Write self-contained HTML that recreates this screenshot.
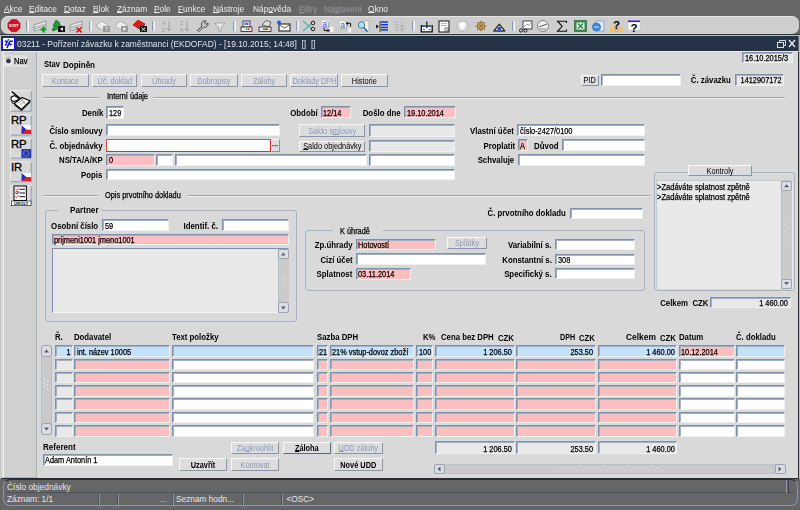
<!DOCTYPE html><html><head><meta charset="utf-8"><style>
*{margin:0;padding:0;box-sizing:border-box}
html,body{width:800px;height:510px;overflow:hidden;background:#666;font-family:"Liberation Sans",sans-serif;color:#000}
div{position:absolute}
.t{white-space:nowrap}
.rg{-webkit-text-stroke:0.25px currentColor}
.fld{border-top:1px solid #7f90aa;border-left:1px solid #7f90aa;border-right:1px solid #eef1f4;border-bottom:1px solid #eef1f4;box-shadow:inset 1px 1px 0 #a4b1c4}
.w{background:#fff}
.p{background:#ffbfc0}
.g{background:#e8e8e8}
.bl{background:#c4e1fb}
.btn{border-top:1px solid #f8f8f8;border-left:1px solid #f8f8f8;border-right:1px solid #8495ad;border-bottom:1px solid #8495ad;background:#dddddd}
u{text-decoration:underline;text-underline-offset:0px;text-decoration-thickness:1px}
.frm{border:1px solid #a6b2c5;border-radius:3px}
.hr{border-top:1px solid #a6a6a6;border-bottom:1px solid #eeeeee}
</style></head><body>
<div class="t" style="left:3.50px;top:3.00px;font-size:9px;line-height:12px;transform:scaleX(0.93);transform-origin:0 0;color:#ececec;"><u>A</u>kce</div>
<div class="t" style="left:29.00px;top:3.00px;font-size:9px;line-height:12px;transform:scaleX(0.93);transform-origin:0 0;color:#ececec;"><u>E</u>ditace</div>
<div class="t" style="left:64.00px;top:3.00px;font-size:9px;line-height:12px;transform:scaleX(0.93);transform-origin:0 0;color:#ececec;"><u>D</u>otaz</div>
<div class="t" style="left:93.00px;top:3.00px;font-size:9px;line-height:12px;transform:scaleX(0.93);transform-origin:0 0;color:#ececec;"><u>B</u>lok</div>
<div class="t" style="left:117.00px;top:3.00px;font-size:9px;line-height:12px;transform:scaleX(0.93);transform-origin:0 0;color:#ececec;"><u>Z</u>áznam</div>
<div class="t" style="left:154.00px;top:3.00px;font-size:9px;line-height:12px;transform:scaleX(0.93);transform-origin:0 0;color:#ececec;"><u>P</u>ole</div>
<div class="t" style="left:178.00px;top:3.00px;font-size:9px;line-height:12px;transform:scaleX(0.93);transform-origin:0 0;color:#ececec;"><u>F</u>unkce</div>
<div class="t" style="left:213.00px;top:3.00px;font-size:9px;line-height:12px;transform:scaleX(0.93);transform-origin:0 0;color:#ececec;"><u>N</u>ástroje</div>
<div class="t" style="left:252.50px;top:3.00px;font-size:9px;line-height:12px;transform:scaleX(0.93);transform-origin:0 0;color:#ececec;">Náp<u>o</u>věda</div>
<div class="t" style="left:368.00px;top:3.00px;font-size:9px;line-height:12px;transform:scaleX(0.93);transform-origin:0 0;color:#ececec;"><u>O</u>kno</div>
<div class="t" style="left:299.00px;top:3.00px;font-size:9px;line-height:12px;transform:scaleX(0.93);transform-origin:0 0;color:#8d9096;text-shadow:0.6px 0.6px 0 #7a7a7a"><u>F</u>iltry</div>
<div class="t" style="left:323.50px;top:3.00px;font-size:9px;line-height:12px;transform:scaleX(0.93);transform-origin:0 0;color:#8d9096;text-shadow:0.6px 0.6px 0 #7a7a7a">Na<u>s</u>tavení</div>
<div class="" style="left:1.00px;top:16.00px;width:798.00px;height:18.00px;background:#cecece;border-radius:7px;border-top:1px solid #e4e4e4;border-left:1px solid #dadada"></div>
<div class="" style="left:26.00px;top:21.00px;width:2.50px;height:10.00px;background:#d8e0ea;border-left:1px solid #8c9cb4;border-right:1px solid #f4f4f4"></div>
<div class="" style="left:89.00px;top:21.00px;width:2.50px;height:10.00px;background:#d8e0ea;border-left:1px solid #8c9cb4;border-right:1px solid #f4f4f4"></div>
<div class="" style="left:152.00px;top:21.00px;width:2.50px;height:10.00px;background:#d8e0ea;border-left:1px solid #8c9cb4;border-right:1px solid #f4f4f4"></div>
<div class="" style="left:233.00px;top:21.00px;width:2.50px;height:10.00px;background:#d8e0ea;border-left:1px solid #8c9cb4;border-right:1px solid #f4f4f4"></div>
<div class="" style="left:296.00px;top:21.00px;width:2.50px;height:10.00px;background:#d8e0ea;border-left:1px solid #8c9cb4;border-right:1px solid #f4f4f4"></div>
<div class="" style="left:412.00px;top:21.00px;width:2.50px;height:10.00px;background:#d8e0ea;border-left:1px solid #8c9cb4;border-right:1px solid #f4f4f4"></div>
<div class="" style="left:512.00px;top:21.00px;width:2.50px;height:10.00px;background:#d8e0ea;border-left:1px solid #8c9cb4;border-right:1px solid #f4f4f4"></div>
<svg style="position:absolute;left:0;top:0" width="800" height="40" viewBox="0 0 800 40"><polygon points="20.10,28.13 16.53,31.70 11.47,31.70 7.90,28.13 7.90,23.07 11.47,19.50 16.53,19.50 20.10,23.07" fill="#d4102a" stroke="#b00818" stroke-width="0.5"/><text x="14" y="27.3" font-family="Liberation Sans" font-weight="bold" font-size="4.2" fill="#fff" text-anchor="middle">EXIT</text><polygon points="34,25 46,21 46,28 34,31" fill="#e8e8e8" stroke="#8a8a8a" stroke-width="0.8"/><path d="M34 27.5 L46 24 M34 29 L46 25.8" stroke="#9a9a9a" stroke-width="0.8"/><path d="M43.5 26.5 V32.5 M40.5 29.5 H46.5" stroke="#10a020" stroke-width="2.2"/><polygon points="56,20 60,23 58.5,23 62,27 53,31 52,29 55,27 53,26" fill="#18a030" stroke="#0a5a10" stroke-width="0.6"/><rect x="58" y="26" width="7" height="6" fill="#111"/><polygon points="60,29 63,27.2 63,30.8" fill="#fff"/><polygon points="70,25 82,21 82,28 70,31" fill="#e8e8e8" stroke="#8a8a8a" stroke-width="0.8"/><path d="M70 27.5 L82 24 M70 29 L82 25.8" stroke="#9a9a9a" stroke-width="0.8"/><path d="M76.5 27.5 L81.5 32.3 M81.5 27.5 L76.5 32.3" stroke="#e01010" stroke-width="1.6"/><polygon points="96,26 101,21 108,25 104,31" fill="#ececec" stroke="#a8a8a8" stroke-width="0.8"/><rect x="103" y="26" width="7" height="6" fill="#9a9a9a"/><text x="106.5" y="31" font-size="5" font-weight="bold" fill="#eee" text-anchor="middle" font-family="Liberation Sans">?</text><polygon points="115,26 120,21 127,25 123,31" fill="#ececec" stroke="#a8a8a8" stroke-width="0.8"/><rect x="121" y="26" width="7" height="6" fill="#9a9a9a"/><polygon points="123,27.2 126.5,29 123,30.8" fill="#eee"/><polygon points="133,25 138,20 145,24 141,30" fill="#e01818" stroke="#900" stroke-width="0.6"/><rect x="140" y="26" width="7" height="6" fill="#111"/><path d="M141.5 27.5 L145.5 31 M145.5 27.5 L141.5 31" stroke="#fff" stroke-width="0.9"/><text x="162" y="25.3" font-size="5" fill="#9a9a9a" font-family="Liberation Sans">A</text><text x="162" y="31.5" font-size="5" fill="#9a9a9a" font-family="Liberation Sans">Z</text><path d="M169 21 V31 M167 28.5 L169 31 L171 28.5" stroke="#9a9a9a" stroke-width="0.9" fill="none"/><text x="180" y="25.3" font-size="5" fill="#9a9a9a" font-family="Liberation Sans">Z</text><text x="180" y="31.5" font-size="5" fill="#9a9a9a" font-family="Liberation Sans">A</text><path d="M187 21 V31 M185 28.5 L187 31 L189 28.5" stroke="#9a9a9a" stroke-width="0.9" fill="none"/><path d="M197 31 L202 26 C200.5 23 203 20 206 21 L204.5 23 L206 24.5 L208 23 C208.5 26 206 28 203.5 27 L198.5 32" stroke="#333" stroke-width="0.9" fill="none"/><polygon points="214,23 225,23 221,27 221,31 218.5,31 218.5,27" fill="#e8e8e8" stroke="#9a9a9a" stroke-width="0.8"/><rect x="243" y="21" width="7" height="6" fill="#f4f4ff" stroke="#223" stroke-width="0.8"/><rect x="244.5" y="22.5" width="4" height="2.5" fill="#6a6ad0"/><rect x="241" y="27" width="11" height="4.5" fill="#e8e8e8" stroke="#222" stroke-width="0.8"/><rect x="246" y="28.5" width="1.5" height="1.5" fill="#2a2"/><rect x="248" y="28.5" width="1.5" height="1.5" fill="#d22"/><polygon points="262,25 266,20.5 271,22 269,27" fill="#ddd" stroke="#333" stroke-width="0.7"/><rect x="259" y="27" width="12" height="4.5" fill="#e8e8e8" stroke="#222" stroke-width="0.8"/><rect x="263" y="28.5" width="3" height="1.5" fill="#2a2"/><rect x="266" y="28.5" width="2" height="1.5" fill="#d22"/><rect x="279" y="24" width="11" height="7" fill="#fff" stroke="#111" stroke-width="1"/><path d="M279.5 25 L284.5 28 L289.5 25" stroke="#111" stroke-width="0.7" fill="none"/><circle cx="279" cy="22.5" r="2" fill="#1060f0"/><path d="M303 21 L311 28 M303 31 L311 24" stroke="#50b0b0" stroke-width="1.2"/><circle cx="313" cy="23" r="1.8" fill="none" stroke="#111" stroke-width="0.9"/><circle cx="313" cy="29" r="1.8" fill="none" stroke="#111" stroke-width="0.9"/><rect x="322" y="20.5" width="6.5" height="7" fill="#f8f8f8"/><path d="M326.5 20.5 L328.5 22.5 V27.5" stroke="#999" stroke-width="0.8" fill="none"/><path d="M322 27.8 H328" stroke="#888" stroke-width="0.6"/><text x="322.2" y="26.8" font-size="8.5" fill="#3a4cff" font-family="Liberation Sans">a</text><path d="M324.2 28 V30.6 H328" stroke="#111" stroke-width="1" fill="none"/><polygon points="327.5,29 330,30.6 327.5,32.2" fill="#111"/><rect x="330" y="26.5" width="3.3" height="5.5" fill="#f0f0f0"/><rect x="340" y="21.5" width="6.5" height="7" fill="#f8f8f8"/><path d="M344.5 21.5 L346.5 23.5 V28.5" stroke="#999" stroke-width="0.8" fill="none"/><path d="M340 28.8 H346" stroke="#888" stroke-width="0.6"/><text x="340.2" y="27.8" font-size="8.5" fill="#3a4cff" font-family="Liberation Sans">a</text><path d="M350.6 26.5 V23.3 H347.5" stroke="#111" stroke-width="1" fill="none"/><polygon points="348,21.7 345.5,23.3 348,24.9" fill="#111"/><rect x="348" y="28" width="3.3" height="4.5" fill="#f0f0f0"/><rect x="362" y="21" width="7" height="10" fill="#f0f0f0" stroke="#999" stroke-width="0.6"/><circle cx="361.5" cy="25" r="3.2" fill="#bfe0f0" stroke="#3080a0" stroke-width="1"/><path d="M363.5 27.5 L367.5 31.5" stroke="#1060d0" stroke-width="1.6"/><path d="M380 21 V32" stroke="#111" stroke-width="0.8"/><path d="M381 22 H388 M381 24.7 H388 M381 27.4 H388 M381 30.1 H388" stroke="#1a38d0" stroke-width="1.5"/><polygon points="376,24.5 379,26.5 376,28.5" fill="#111"/><path d="M395 22 H399 M395 24.7 H399 M395 27.4 H399 M395 30.1 H399 M402 21 V32 M400 26 H405 M400 29 H405" stroke="#aaa" stroke-width="0.8"/><rect x="421" y="20" width="11" height="1" fill="#c8d8ec"/><path d="M421.3 25 V31.8 H432.2 V25" stroke="#111" stroke-width="1.3" fill="#f4f4f4"/><rect x="422" y="25" width="3" height="2" fill="#2a58d8"/><rect x="428.5" y="25" width="3" height="2" fill="#2a58d8"/><path d="M423 29.5 H425 M428.5 29.5 H430.5" stroke="#555" stroke-width="0.8"/><path d="M426.8 21.5 V26.5" stroke="#111" stroke-width="1.2"/><polygon points="424.8,25.5 426.8,28.3 428.8,25.5" fill="#111"/><rect x="439" y="21" width="10" height="11" fill="#fff" stroke="#111" stroke-width="1"/><path d="M441 23.5 H447 M441 25.5 H447" stroke="#999" stroke-width="0.7"/><rect x="445" y="28" width="3" height="3" fill="none" stroke="#333" stroke-width="0.6"/><circle cx="462.5" cy="26" r="5.5" fill="#e0e0e0" stroke="#aaa" stroke-width="0.8"/><path d="M459 23 C461 22 463 24 465 23 C466 25 464 28 462 30 C461 27 459 26 459 23" fill="#fff"/><circle cx="481" cy="26" r="3.6" fill="none" stroke="#a07020" stroke-width="1.3"/><path d="M481 20.5 V31.5 M475.5 26 H486.5 M477 22 L485 30 M485 22 L477 30" stroke="#a07020" stroke-width="1"/><circle cx="481" cy="26" r="1.2" fill="#a07020"/><polygon points="493.8,31 499.3,24.2 504.8,31" fill="#e8e8e8" stroke="#333" stroke-width="1.3" stroke-linejoin="round"/><circle cx="499.3" cy="28.6" r="1.9" fill="#1848f0"/><path d="M494.5 24.5 L495.8 25.5 M504 24.5 L502.8 25.5 M499.3 21.2 V22.6 M496.5 22.2 L497.3 23.2 M502 22.2 L501.3 23.2" stroke="#e8e030" stroke-width="0.8"/><rect x="523" y="21" width="9" height="8" fill="#fff" stroke="#222" stroke-width="0.8"/><path d="M524 27 L527 24 L529 25.5 L531 23" stroke="#555" stroke-width="0.6" fill="none"/><circle cx="521" cy="30.5" r="1.6" fill="none" stroke="#111" stroke-width="0.9"/><circle cx="525.5" cy="30.5" r="1.6" fill="none" stroke="#111" stroke-width="0.9"/><circle cx="543" cy="26" r="5.5" fill="#f0f0f0" stroke="#777" stroke-width="0.9"/><path d="M539 27 L547 24" stroke="#333" stroke-width="0.8"/><path d="M540 29 H546" stroke="#666" stroke-width="0.8"/><path d="M566.5 23 V21.2 H557.5 L562.2 26.3 L557.5 31.3 H566.5 V29.5" stroke="#111" stroke-width="1.1" fill="none"/><rect x="574.5" y="20.5" width="12" height="11" fill="#3a8a48" stroke="#2a6a38" stroke-width="0.7"/><rect x="576.5" y="22.5" width="8" height="7" fill="#e8f4e8"/><path d="M578 23.5 L583 28.5 M583 23.5 L578 28.5" stroke="#2a7a3a" stroke-width="1.3"/><rect x="596" y="21" width="8" height="10" fill="#e0e8ff" stroke="#8090c0" stroke-width="0.7"/><circle cx="596.5" cy="27" r="4" fill="#3a8ae8" stroke="#1a5ab0" stroke-width="0.6"/><path d="M594 27 H599" stroke="#fff" stroke-width="0.8"/><rect x="610" y="26.5" width="3.5" height="5.5" fill="#f4c070"/><rect x="614.5" y="26.5" width="4" height="5.5" fill="#e8b060"/><rect x="619.5" y="26.5" width="3.5" height="5.5" fill="#f4c070"/><text x="616.5" y="29.2" font-size="11.5" font-weight="bold" fill="#000" text-anchor="middle" font-family="Liberation Sans">?</text><rect x="628" y="20.5" width="12" height="9.5" fill="#fff" stroke="#bbb" stroke-width="0.5"/><rect x="628" y="20.5" width="12" height="1.6" fill="#4010e0"/><text x="634" y="31.5" font-size="11.5" font-weight="bold" fill="#000" text-anchor="middle" font-family="Liberation Sans">?</text></svg>
<div class="" style="left:0.00px;top:34.00px;width:800.00px;height:2.00px;background:#59606a;border-top:1px solid #30363e;border-bottom:1px solid #b8bec6"></div>
<div class="" style="left:1.00px;top:36.00px;width:797.00px;height:15.00px;background:#263247"></div>
<div class="" style="left:2.00px;top:37.00px;width:13.00px;height:13.00px;background:#fff;border:1.3px solid #1414e0"><svg width="11" height="11" style="position:absolute;left:-0.3px;top:-0.3px"><path d="M1.8 3.2 H4.3 L2.4 7.8" stroke="#1414e0" stroke-width="1.5" fill="none"/><path d="M4 10 L6.8 3.3 H10 M5.6 6.4 H8.8" stroke="#1414e0" stroke-width="1.6" fill="none"/><circle cx="5.3" cy="1.8" r="0.8" fill="#102080"/></svg></div>
<div class="t" style="left:16.50px;top:38.00px;font-size:9.4px;line-height:12px;color:#dfe4ec;transform:scaleX(0.9);transform-origin:0 0">03211 - Pořízení závazku k zaměstnanci (EKDOFAD) - [19.10.2015; 14:48]&nbsp; []&nbsp; []</div>
<svg style="position:absolute;left:774px;top:38px" width="24" height="11"><rect x="3.5" y="4.5" width="6" height="5" fill="none" stroke="#d8dce4" stroke-width="1"/><path d="M5.5 4.5 V2.5 H11.5 V7.5 H9.5" fill="none" stroke="#d8dce4" stroke-width="1"/><path d="M15 2 L21 9 M21 2 L15 9" stroke="#eef0f4" stroke-width="1.3"/></svg>
<div class="" style="left:1.00px;top:51.00px;width:797.50px;height:428.00px;background:#d9d9d9;border-top:1px solid #e8eaee;border-right:1.5px solid #2e3038;border-bottom:1px solid #2a2c30"></div>
<div class="" style="left:0.00px;top:36.00px;width:1.00px;height:443.00px;background:#c8c8c8"></div>
<div class="" style="left:798.50px;top:36.00px;width:1.50px;height:443.00px;background:#bcbcbc"></div>
<div class="" style="left:3.00px;top:52.00px;width:34.00px;height:425.50px;border-left:1px solid #f2f2f2;border-right:1px solid #a8b2c0;border-bottom:1px solid #a8b2c0;background:#d1d1d1"></div>
<div class="" style="left:4.00px;top:55.00px;width:23.00px;height:12.00px;background:#dfdfdf"></div>
<svg style="position:absolute;left:3px;top:55px" width="12" height="12"><circle cx="5.5" cy="6" r="3.8" fill="#d8d8d8" stroke="#f4f4f4" stroke-width="1"/><path d="M2.2 4.5 A3.8 3.8 0 0 1 8 3" stroke="#9a9a9a" stroke-width="1" fill="none"/><circle cx="5.5" cy="6" r="2.3" fill="#303848"/></svg>
<div class="t rg" style="left:14.00px;top:56.00px;font-size:8.2px;line-height:12px;transform:scaleX(0.92);transform-origin:0 0;">Nav</div>
<svg style="position:absolute;left:0;top:0" width="40" height="220" viewBox="0 0 40 220"><rect x="10" y="90" width="21.7" height="21.700000000000003" fill="#d8d8d8"/><path d="M10.5 111.7 V90.5 H31.2" stroke="#ececec" stroke-width="1" fill="none"/><path d="M31.2 91 V111.2 H10.5" stroke="#8c9cb4" stroke-width="1" fill="none"/><rect x="10" y="114.4" width="21.7" height="21.19999999999999" fill="#d8d8d8"/><path d="M10.5 135.6 V114.9 H31.2" stroke="#ececec" stroke-width="1" fill="none"/><path d="M31.2 115.4 V135.1 H10.5" stroke="#8c9cb4" stroke-width="1" fill="none"/><rect x="10" y="138" width="21.7" height="20.69999999999999" fill="#d8d8d8"/><path d="M10.5 158.7 V138.5 H31.2" stroke="#ececec" stroke-width="1" fill="none"/><path d="M31.2 139 V158.2 H10.5" stroke="#8c9cb4" stroke-width="1" fill="none"/><rect x="10" y="161.5" width="21.7" height="20.69999999999999" fill="#d8d8d8"/><path d="M10.5 182.2 V162.0 H31.2" stroke="#ececec" stroke-width="1" fill="none"/><path d="M31.2 162.5 V181.7 H10.5" stroke="#8c9cb4" stroke-width="1" fill="none"/><rect x="10" y="185.3" width="21.7" height="20.399999999999977" fill="#d8d8d8"/><path d="M10.5 205.7 V185.8 H31.2" stroke="#ececec" stroke-width="1" fill="none"/><path d="M31.2 186.3 V205.2 H10.5" stroke="#8c9cb4" stroke-width="1" fill="none"/><polygon points="14.2,103.5 22,97.5 30,100.8 21.5,109.5" fill="#fafafa" stroke="#000" stroke-width="1.2" stroke-linejoin="round"/><path d="M14.5 104.8 L21.5 110.6 L30 102" stroke="#222" stroke-width="1.1" fill="none"/><path d="M17.5 103.3 L23.5 99.5 M19.5 105 L25.5 101.3 M21.8 99 L25.8 105.5" stroke="#888" stroke-width="0.7"/><path d="M11.8 91.5 L20 98.5" stroke="#000" stroke-width="1.5"/><polygon points="11,97.3 14.5,95.6 18.3,98 17.6,100.3 13.5,101.5 11.2,100.2" fill="#fff" stroke="#000" stroke-width="1.1"/><path d="M11.5 101.5 L13.5 104" stroke="#000" stroke-width="1"/><text x="10.9" y="124.2" font-size="11.3" font-family="Liberation Sans" fill="#000" stroke="#000" stroke-width="0.35">RP</text><rect x="21.6" y="125.2" width="9.4" height="8.799999999999997" fill="#fff"/><rect x="21.6" y="129.6" width="9.4" height="4.399999999999999" fill="#e81c28"/><polygon points="21.6,125.2 26.3,129.6 21.6,134" fill="#1830c8"/><text x="10.9" y="147.7" font-size="11.3" font-family="Liberation Sans" fill="#000" stroke="#000" stroke-width="0.35">RP</text><rect x="21.4" y="149" width="9.7" height="8.900000000000006" fill="#2838c0"/><circle cx="29.05" cy="153.45" r="0.45" fill="#f0e020"/><circle cx="28.67" cy="154.85" r="0.45" fill="#f0e020"/><circle cx="27.65" cy="155.87" r="0.45" fill="#f0e020"/><circle cx="26.25" cy="156.25" r="0.45" fill="#f0e020"/><circle cx="24.85" cy="155.87" r="0.45" fill="#f0e020"/><circle cx="23.83" cy="154.85" r="0.45" fill="#f0e020"/><circle cx="23.45" cy="153.45" r="0.45" fill="#f0e020"/><circle cx="23.83" cy="152.05" r="0.45" fill="#f0e020"/><circle cx="24.85" cy="151.03" r="0.45" fill="#f0e020"/><circle cx="26.25" cy="150.65" r="0.45" fill="#f0e020"/><circle cx="27.65" cy="151.03" r="0.45" fill="#f0e020"/><circle cx="28.67" cy="152.05" r="0.45" fill="#f0e020"/><text x="10.9" y="171.2" font-size="11.3" font-family="Liberation Sans" fill="#000" stroke="#000" stroke-width="0.35">IR</text><rect x="21.6" y="173" width="9.4" height="8" fill="#fff"/><rect x="21.6" y="177.0" width="9.4" height="4.0" fill="#e81c28"/><polygon points="21.6,173 26.3,177.0 21.6,181" fill="#1830c8"/><rect x="14" y="186" width="12.4" height="14.5" fill="#fff" stroke="#111" stroke-width="1.1"/><path d="M15.3 189 L16.8 190.3 L18.6 187.8" stroke="#e02020" stroke-width="0.9" fill="none"/><path d="M19.5 189.3 H25" stroke="#111" stroke-width="1"/><path d="M15.3 192.7 L16.8 194.0 L18.6 191.5" stroke="#e02020" stroke-width="0.9" fill="none"/><path d="M19.5 193.0 H25" stroke="#111" stroke-width="1"/><path d="M15.3 196.4 L16.8 197.70000000000002 L18.6 195.20000000000002" stroke="#e02020" stroke-width="0.9" fill="none"/><path d="M19.5 196.70000000000002 H25" stroke="#111" stroke-width="1"/><rect x="16" y="191.5" width="2.5" height="2" fill="none" stroke="#333" stroke-width="0.5"/><rect x="11.5" y="201" width="19.5" height="4.7" fill="#fff" stroke="#111" stroke-width="0.6"/><text x="21.25" y="205.2" font-size="4.2" font-weight="bold" text-anchor="middle" font-family="Liberation Sans" fill="#000">ÚKOLY</text></svg>
<div class="t" style="left:43.75px;top:59.00px;font-size:8.2px;line-height:12px;transform:scaleX(0.93);transform-origin:0 0;font-weight:bold;">Stav</div>
<div class="t" style="left:62.90px;top:59.00px;font-size:8.6px;line-height:12px;transform:scaleX(0.93);transform-origin:0 0;font-weight:bold;">Dopiněn</div>
<div class="btn dis" style="left:42.25px;top:74.25px;width:46.50px;height:12.50px;"></div>
<div class="t" style="left:42.25px;width:46.50px;text-align:center;top:76.00px;font-size:8.2px;line-height:12px;color:#8a9ab6;transform:scaleX(0.9);">Kontace</div>
<div class="btn dis" style="left:91.90px;top:74.25px;width:45.60px;height:12.50px;"></div>
<div class="t" style="left:91.90px;width:45.60px;text-align:center;top:76.00px;font-size:8.2px;line-height:12px;color:#8a9ab6;transform:scaleX(0.9);">Úč. doklad</div>
<div class="btn dis" style="left:141.00px;top:74.25px;width:46.00px;height:12.50px;"></div>
<div class="t" style="left:141.00px;width:46.00px;text-align:center;top:76.00px;font-size:8.2px;line-height:12px;color:#8a9ab6;transform:scaleX(0.9);">Úhrady</div>
<div class="btn dis" style="left:190.00px;top:74.25px;width:47.50px;height:12.50px;"></div>
<div class="t" style="left:190.00px;width:47.50px;text-align:center;top:76.00px;font-size:8.2px;line-height:12px;color:#8a9ab6;transform:scaleX(0.9);">Dobropisy</div>
<div class="btn dis" style="left:240.50px;top:74.25px;width:46.50px;height:12.50px;"></div>
<div class="t" style="left:240.50px;width:46.50px;text-align:center;top:76.00px;font-size:8.2px;line-height:12px;color:#8a9ab6;transform:scaleX(0.9);">Zálohy</div>
<div class="btn dis" style="left:290.00px;top:74.25px;width:47.50px;height:12.50px;"></div>
<div class="t" style="left:290.00px;width:47.50px;text-align:center;top:76.00px;font-size:8.2px;line-height:12px;color:#8a9ab6;transform:scaleX(0.9);">Doklady DPH</div>
<div class="btn" style="left:341.00px;top:74.25px;width:46.70px;height:12.50px;"></div>
<div class="t" style="left:341.00px;width:46.70px;text-align:center;top:76.00px;font-size:8.2px;line-height:12px;color:#000;transform:scaleX(0.9);">Historie</div>
<div class="btn" style="left:581.00px;top:74.50px;width:17.50px;height:11.00px;"></div>
<div class="t" style="left:581.00px;width:17.50px;text-align:center;top:75.00px;font-size:8.2px;line-height:12px;color:#000;transform:scaleX(0.9);">PID</div>
<div class="fld w" style="left:601.00px;top:73.50px;width:80.00px;height:12.00px;"></div>
<div class="t" style="right:69.50px;top:75.00px;font-size:8.2px;line-height:12px;transform:scaleX(0.957);transform-origin:100% 0;font-weight:bold;">Č. závazku</div>
<div class="fld g" style="left:734.50px;top:73.50px;width:49.50px;height:12.00px;"></div>
<div class="t rg" style="right:18.50px;top:75.00px;font-size:8.2px;line-height:12px;transform:scaleX(0.9);transform-origin:100% 0;">1412907172</div>
<div class="fld g" style="left:742.40px;top:51.60px;width:50.90px;height:11.40px;"></div>
<div class="t rg" style="left:744.90px;top:53.00px;font-size:8.2px;line-height:12px;transform:scaleX(0.9);transform-origin:0 0;">16.10.2015/3</div>
<div class="hr" style="left:43.00px;top:96.80px;width:56.00px;height:2.00px;"></div>
<div class="t rg" style="left:106.50px;top:91.00px;font-size:8.2px;line-height:12px;transform:scaleX(0.9);transform-origin:0 0;">Interní údaje</div>
<div class="hr" style="left:152.50px;top:96.80px;width:632.50px;height:2.00px;"></div>
<div class="t" style="right:697.00px;top:108.00px;font-size:8.2px;line-height:12px;transform:scaleX(0.957);transform-origin:100% 0;font-weight:bold;">Deník</div>
<div class="fld w" style="left:106.00px;top:106.00px;width:18.00px;height:12.60px;"></div>
<div class="t rg" style="left:108.50px;top:108.00px;font-size:8.2px;line-height:12px;transform:scaleX(0.9);transform-origin:0 0;">129</div>
<div class="t" style="right:482.70px;top:108.00px;font-size:8.2px;line-height:12px;transform:scaleX(0.957);transform-origin:100% 0;font-weight:bold;">Období</div>
<div class="fld p" style="left:320.50px;top:106.00px;width:30.50px;height:12.20px;"></div>
<div class="t rg" style="left:323.00px;top:108.00px;font-size:8.2px;line-height:12px;transform:scaleX(0.9);transform-origin:0 0;">12/14</div>
<div class="t" style="right:399.50px;top:108.00px;font-size:8.2px;line-height:12px;transform:scaleX(0.957);transform-origin:100% 0;font-weight:bold;">Došlo dne</div>
<div class="fld p" style="left:404.00px;top:106.00px;width:51.50px;height:12.20px;"></div>
<div class="t rg" style="left:406.50px;top:108.00px;font-size:8.2px;line-height:12px;transform:scaleX(0.9);transform-origin:0 0;">19.10.2014</div>
<div class="t" style="right:697.30px;top:126.00px;font-size:8.2px;line-height:12px;transform:scaleX(0.957);transform-origin:100% 0;font-weight:bold;">Číslo smlouvy</div>
<div class="fld w" style="left:106.00px;top:124.20px;width:173.50px;height:12.20px;"></div>
<div class="btn dis" style="left:298.50px;top:124.00px;width:66.50px;height:13.20px;"></div>
<div class="t" style="left:298.50px;width:66.50px;text-align:center;top:126.00px;font-size:8.2px;line-height:12px;color:#8a9ab6;transform:scaleX(0.9);">Saldo s<u>m</u>louvy</div>
<div class="fld g" style="left:368.50px;top:124.20px;width:86.50px;height:12.80px;"></div>
<div class="t" style="right:285.80px;top:126.00px;font-size:8.2px;line-height:12px;transform:scaleX(0.957);transform-origin:100% 0;font-weight:bold;">Vlastní účet</div>
<div class="fld w" style="left:517.00px;top:124.20px;width:128.00px;height:12.20px;"></div>
<div class="t rg" style="left:519.50px;top:126.00px;font-size:8.2px;line-height:12px;transform:scaleX(0.9);transform-origin:0 0;">číslo-2427/0100</div>
<div class="t" style="right:697.50px;top:141.00px;font-size:8.2px;line-height:12px;transform:scaleX(0.957);transform-origin:100% 0;font-weight:bold;">Č. objednávky</div>
<div class="" style="left:106.00px;top:138.60px;width:165.00px;height:13.10px;background:#fff;border:1px solid #e42a2a;border-top-color:#d85050;border-left-color:#d85050"></div>
<div class="btn" style="left:271.00px;top:139.00px;width:8.50px;height:12.50px;"></div>
<div class="t" style="left:271.00px;width:8.50px;text-align:center;top:140.00px;font-size:7px;line-height:12px;color:#000;transform:scaleX(0.9);"><b>···</b></div>
<div class="btn" style="left:298.50px;top:140.70px;width:66.50px;height:11.80px;"></div>
<div class="t" style="left:298.50px;width:66.50px;text-align:center;top:141.00px;font-size:8.2px;line-height:12px;color:#000;transform:scaleX(0.9);"><u>S</u>aldo objednávky</div>
<div class="fld g" style="left:368.50px;top:139.50px;width:86.50px;height:12.50px;"></div>
<div class="t" style="right:285.00px;top:141.00px;font-size:8.2px;line-height:12px;transform:scaleX(0.957);transform-origin:100% 0;font-weight:bold;">Proplatit</div>
<div class="fld p" style="left:517.50px;top:139.00px;width:10.50px;height:12.00px;"></div>
<div class="t rg" style="left:520.00px;top:141.00px;font-size:8.2px;line-height:12px;transform:scaleX(0.9);transform-origin:0 0;">A</div>
<div class="t" style="right:241.50px;top:141.00px;font-size:8.2px;line-height:12px;transform:scaleX(0.957);transform-origin:100% 0;font-weight:bold;">Důvod</div>
<div class="fld w" style="left:562.00px;top:139.00px;width:83.00px;height:12.00px;"></div>
<div class="t" style="right:697.50px;top:155.00px;font-size:8.2px;line-height:12px;transform:scaleX(0.957);transform-origin:100% 0;font-weight:bold;">NS/TA/A/KP</div>
<div class="fld p" style="left:106.00px;top:153.70px;width:48.50px;height:12.30px;"></div>
<div class="t rg" style="left:108.50px;top:155.00px;font-size:8.2px;line-height:12px;transform:scaleX(0.9);transform-origin:0 0;">0</div>
<div class="fld w" style="left:156.00px;top:154.00px;width:17.00px;height:12.00px;"></div>
<div class="fld w" style="left:175.00px;top:154.00px;width:192.00px;height:12.00px;"></div>
<div class="fld w" style="left:368.50px;top:154.00px;width:86.50px;height:12.00px;"></div>
<div class="t" style="right:285.50px;top:155.00px;font-size:8.2px;line-height:12px;transform:scaleX(0.957);transform-origin:100% 0;font-weight:bold;">Schvaluje</div>
<div class="fld w" style="left:518.00px;top:154.00px;width:127.00px;height:12.00px;"></div>
<div class="t" style="right:697.50px;top:170.00px;font-size:8.2px;line-height:12px;transform:scaleX(0.957);transform-origin:100% 0;font-weight:bold;">Popis</div>
<div class="fld w" style="left:106.00px;top:168.70px;width:349.00px;height:11.50px;"></div>
<div class="hr" style="left:43.00px;top:195.20px;width:55.00px;height:2.00px;"></div>
<div class="t rg" style="left:105.00px;top:190.00px;font-size:8.2px;line-height:12px;transform:scaleX(0.9);transform-origin:0 0;">Opis prvotního dokladu</div>
<div class="hr" style="left:188.00px;top:195.20px;width:462.00px;height:2.00px;"></div>
<div class="t" style="right:233.70px;top:208.00px;font-size:8.2px;line-height:12px;transform:scaleX(0.957);transform-origin:100% 0;font-weight:bold;">Č. prvotního dokladu</div>
<div class="fld w" style="left:569.50px;top:207.50px;width:73.00px;height:11.30px;"></div>
<div class="frm" style="left:45.00px;top:210.00px;width:252.00px;height:112.00px;"></div>
<div class="" style="left:58.00px;top:205.00px;width:44.00px;height:10.00px;background:#d9d9d9"></div>
<div class="t" style="left:70.00px;top:204.00px;font-size:8.6px;line-height:12px;transform:scaleX(0.95);transform-origin:0 0;font-weight:bold;">Partner</div>
<div class="t" style="right:702.20px;top:221.00px;font-size:8.2px;line-height:12px;transform:scaleX(0.957);transform-origin:100% 0;font-weight:bold;">Osobní číslo</div>
<div class="fld w" style="left:102.00px;top:219.40px;width:67.00px;height:11.60px;"></div>
<div class="t rg" style="left:104.50px;top:221.00px;font-size:8.2px;line-height:12px;transform:scaleX(0.9);transform-origin:0 0;">59</div>
<div class="t" style="right:582.50px;top:221.00px;font-size:8.2px;line-height:12px;transform:scaleX(0.957);transform-origin:100% 0;font-weight:bold;">Identif. č.</div>
<div class="fld w" style="left:221.50px;top:219.40px;width:67.00px;height:11.60px;"></div>
<div class="fld p" style="left:51.50px;top:233.80px;width:237.50px;height:11.60px;"></div>
<div class="t rg" style="left:54.00px;top:235.00px;font-size:8.2px;line-height:12px;transform:scaleX(0.9);transform-origin:0 0;">prijmeni1001 jmeno1001</div>
<div class="" style="left:51.50px;top:248.00px;width:237.50px;height:65.00px;background:#e8e8e8;border-top:1px solid #7f90aa;border-left:1px solid #7f90aa;border-right:1px solid #f2f4f6;border-bottom:1px solid #f2f4f6"></div>
<div class="" style="left:278.00px;top:248.50px;width:10.50px;height:64.00px;background:#cbcbcb;border-left:1px solid #b7c0cc"></div>
<div class="" style="left:278.00px;top:248.50px;width:10.50px;height:10.50px;background:#dedede;border:1px solid #9aa6b8;border-radius:2px"></div>
<div class="" style="left:278.00px;top:302.00px;width:10.50px;height:10.50px;background:#dedede;border:1px solid #9aa6b8;border-radius:2px"></div>
<svg style="position:absolute;left:278px;top:248px" width="11" height="66"><polygon points="3,7.5 5.3,4.5 7.6,7.5" fill="#50607a"/><polygon points="3,58.5 5.3,61.5 7.6,58.5" fill="#50607a"/><g fill="#f4f4f4"><circle cx="4" cy="28" r="0.6"/><circle cx="6.5" cy="30" r="0.6"/><circle cx="4" cy="32" r="0.6"/><circle cx="6.5" cy="34" r="0.6"/><circle cx="4" cy="36" r="0.6"/><circle cx="6.5" cy="38" r="0.6"/></g></svg>
<div class="frm" style="left:304.50px;top:230.00px;width:340.00px;height:60.50px;"></div>
<div class="" style="left:333.00px;top:225.00px;width:50.00px;height:10.00px;background:#d9d9d9"></div>
<div class="t rg" style="left:339.50px;top:226.00px;font-size:8.2px;line-height:12px;transform:scaleX(0.9);transform-origin:0 0;">K úhradě</div>
<div class="t" style="right:447.70px;top:240.00px;font-size:8.2px;line-height:12px;transform:scaleX(0.957);transform-origin:100% 0;font-weight:bold;">Zp.úhrady</div>
<div class="fld p" style="left:355.90px;top:238.90px;width:80.10px;height:11.40px;"></div>
<div class="t rg" style="left:358.40px;top:240.00px;font-size:8.2px;line-height:12px;transform:scaleX(0.9);transform-origin:0 0;">Hotovostí</div>
<div class="btn dis" style="left:446.50px;top:237.00px;width:40.00px;height:12.20px;"></div>
<div class="t" style="left:446.50px;width:40.00px;text-align:center;top:238.00px;font-size:8.2px;line-height:12px;color:#8a9ab6;transform:scaleX(0.9);">Splátky</div>
<div class="t" style="right:248.20px;top:240.00px;font-size:8.2px;line-height:12px;transform:scaleX(0.957);transform-origin:100% 0;font-weight:bold;">Variabilní s.</div>
<div class="fld w" style="left:555.30px;top:239.20px;width:79.70px;height:11.00px;"></div>
<div class="t" style="right:447.70px;top:255.00px;font-size:8.2px;line-height:12px;transform:scaleX(0.957);transform-origin:100% 0;font-weight:bold;">Cizí účet</div>
<div class="fld w" style="left:355.90px;top:253.20px;width:130.10px;height:11.60px;"></div>
<div class="t" style="right:248.20px;top:255.00px;font-size:8.2px;line-height:12px;transform:scaleX(0.957);transform-origin:100% 0;font-weight:bold;">Konstantní s.</div>
<div class="fld w" style="left:555.30px;top:253.50px;width:79.70px;height:11.20px;"></div>
<div class="t rg" style="left:557.80px;top:255.00px;font-size:8.2px;line-height:12px;transform:scaleX(0.9);transform-origin:0 0;">308</div>
<div class="t" style="right:447.70px;top:269.00px;font-size:8.2px;line-height:12px;transform:scaleX(0.957);transform-origin:100% 0;font-weight:bold;">Splatnost</div>
<div class="fld p" style="left:355.90px;top:268.00px;width:55.10px;height:11.70px;"></div>
<div class="t rg" style="left:358.40px;top:269.00px;font-size:8.2px;line-height:12px;transform:scaleX(0.9);transform-origin:0 0;">03.11.2014</div>
<div class="t" style="right:248.20px;top:269.00px;font-size:8.2px;line-height:12px;transform:scaleX(0.957);transform-origin:100% 0;font-weight:bold;">Specifický s.</div>
<div class="fld w" style="left:555.30px;top:268.20px;width:79.70px;height:11.20px;"></div>
<div class="frm" style="left:653.50px;top:171.50px;width:141.50px;height:119.00px;"></div>
<div class="btn" style="left:688.00px;top:165.00px;width:64.00px;height:11.20px;"></div>
<div class="t" style="left:688.00px;width:64.00px;text-align:center;top:166.00px;font-size:8.2px;line-height:12px;color:#000;transform:scaleX(0.9);">Kontroly</div>
<div class="" style="left:655.50px;top:180.00px;width:137.50px;height:109.00px;background:#e9e9e9;border-top:1px solid #c0c8d4;border-left:1px solid #c0c8d4"></div>
<div class="t rg" style="left:657.00px;top:182.00px;font-size:8.2px;line-height:12px;transform:scaleX(0.92);transform-origin:0 0;">&gt;Zadáváte splatnost zpětně</div>
<div class="t rg" style="left:657.00px;top:192.00px;font-size:8.2px;line-height:12px;transform:scaleX(0.92);transform-origin:0 0;">&gt;Zadáváte splatnost zpětně</div>
<div class="" style="left:781.00px;top:180.50px;width:11.00px;height:108.00px;background:#cbcbcb;border-left:1px solid #b7c0cc"></div>
<div class="" style="left:781.00px;top:180.50px;width:11.00px;height:10.00px;background:#dedede;border:1px solid #9aa6b8;border-radius:2px"></div>
<div class="" style="left:781.00px;top:278.50px;width:11.00px;height:10.00px;background:#dedede;border:1px solid #9aa6b8;border-radius:2px"></div>
<svg style="position:absolute;left:781px;top:180px" width="11" height="110"><polygon points="3,7.2 5.5,4.2 8,7.2" fill="#50607a"/><polygon points="3,102 5.5,105 8,102" fill="#50607a"/><g fill="#f4f4f4"><circle cx="4" cy="39" r="0.6"/><circle cx="7" cy="42" r="0.6"/><circle cx="4" cy="45" r="0.6"/><circle cx="7" cy="48" r="0.6"/><circle cx="4" cy="51" r="0.6"/><circle cx="7" cy="54" r="0.6"/><circle cx="4" cy="57" r="0.6"/><circle cx="7" cy="60" r="0.6"/><circle cx="4" cy="63" r="0.6"/></g></svg>
<div class="t" style="right:91.80px;top:298.00px;font-size:8.2px;line-height:12px;transform:scaleX(0.957);transform-origin:100% 0;font-weight:bold;">Celkem&nbsp; CZK</div>
<div class="fld g" style="left:710.00px;top:296.50px;width:80.50px;height:11.70px;"></div>
<div class="t rg" style="right:12.00px;top:298.00px;font-size:8.2px;line-height:12px;transform:scaleX(0.9);transform-origin:100% 0;">1 460.00</div>
<div class="t" style="left:55.30px;top:332.00px;font-size:8.2px;line-height:12px;transform:scaleX(0.95);transform-origin:0 0;font-weight:bold;">Ř.</div>
<div class="t" style="left:74.10px;top:332.00px;font-size:8.2px;line-height:12px;transform:scaleX(0.95);transform-origin:0 0;font-weight:bold;">Dodavatel</div>
<div class="t" style="left:171.50px;top:332.00px;font-size:8.2px;line-height:12px;transform:scaleX(0.95);transform-origin:0 0;font-weight:bold;">Text položky</div>
<div class="t" style="left:316.50px;top:332.00px;font-size:8.2px;line-height:12px;transform:scaleX(0.95);transform-origin:0 0;font-weight:bold;">Sazba DPH</div>
<div class="t" style="left:423.20px;top:332.00px;font-size:8.2px;line-height:12px;transform:scaleX(0.95);transform-origin:0 0;font-weight:bold;">K%</div>
<div class="t" style="left:441.00px;top:332.00px;font-size:8.2px;line-height:12px;transform:scaleX(0.95);transform-origin:0 0;font-weight:bold;">Cena bez DPH</div>
<div class="t" style="left:497.50px;top:333.00px;font-size:8.2px;line-height:12px;transform:scaleX(0.95);transform-origin:0 0;font-weight:bold;">CZK</div>
<div class="t" style="left:560.00px;top:332.00px;font-size:8.2px;line-height:12px;transform:scaleX(0.88);transform-origin:0 0;font-weight:bold;">DPH</div>
<div class="t" style="left:578.80px;top:333.00px;font-size:8.2px;line-height:12px;transform:scaleX(0.95);transform-origin:0 0;font-weight:bold;">CZK</div>
<div class="t" style="left:625.50px;top:332.00px;font-size:8.2px;line-height:12px;transform:scaleX(1.03);transform-origin:0 0;font-weight:bold;">Celkem</div>
<div class="t" style="left:660.00px;top:333.00px;font-size:8.2px;line-height:12px;transform:scaleX(0.95);transform-origin:0 0;font-weight:bold;">CZK</div>
<div class="t" style="left:678.50px;top:332.00px;font-size:8.2px;line-height:12px;transform:scaleX(0.95);transform-origin:0 0;font-weight:bold;">Datum</div>
<div class="t" style="left:735.50px;top:332.00px;font-size:8.2px;line-height:12px;transform:scaleX(0.95);transform-origin:0 0;font-weight:bold;">Č. dokladu</div>
<div class="fld bl" style="left:55.30px;top:345.20px;width:17.60px;height:11.60px;"></div>
<div class="t rg" style="right:729.60px;top:347.00px;font-size:8.2px;line-height:12px;transform:scaleX(0.9);transform-origin:100% 0;">1</div>
<div class="fld bl" style="left:74.10px;top:345.20px;width:95.90px;height:11.60px;"></div>
<div class="t rg" style="left:76.60px;top:347.00px;font-size:8.2px;line-height:12px;transform:scaleX(0.9);transform-origin:0 0;">int. název 10005</div>
<div class="fld bl" style="left:171.50px;top:345.20px;width:142.50px;height:11.60px;"></div>
<div class="fld bl" style="left:316.50px;top:345.20px;width:11.50px;height:11.60px;"></div>
<div class="t rg" style="left:319.00px;top:347.00px;font-size:8.2px;line-height:12px;transform:scaleX(0.9);transform-origin:0 0;">21</div>
<div class="fld bl" style="left:329.50px;top:345.20px;width:84.50px;height:11.60px;"></div>
<div class="t rg" style="left:332.00px;top:347.00px;font-size:8.2px;line-height:12px;transform:scaleX(0.9);transform-origin:0 0;">21% vstup-dovoz zboží</div>
<div class="fld bl" style="left:416.00px;top:345.20px;width:17.00px;height:11.60px;"></div>
<div class="t rg" style="left:418.50px;top:347.00px;font-size:8.2px;line-height:12px;transform:scaleX(0.9);transform-origin:0 0;">100</div>
<div class="fld bl" style="left:434.50px;top:345.20px;width:80.00px;height:11.60px;"></div>
<div class="t rg" style="right:288.00px;top:347.00px;font-size:8.2px;line-height:12px;transform:scaleX(0.9);transform-origin:100% 0;">1 206.50</div>
<div class="fld bl" style="left:516.00px;top:345.20px;width:80.00px;height:11.60px;"></div>
<div class="t rg" style="right:206.50px;top:347.00px;font-size:8.2px;line-height:12px;transform:scaleX(0.9);transform-origin:100% 0;">253.50</div>
<div class="fld bl" style="left:597.50px;top:345.20px;width:79.50px;height:11.60px;"></div>
<div class="t rg" style="right:125.50px;top:347.00px;font-size:8.2px;line-height:12px;transform:scaleX(0.9);transform-origin:100% 0;">1 460.00</div>
<div class="fld p" style="left:678.50px;top:345.20px;width:56.00px;height:11.60px;"></div>
<div class="t rg" style="left:681.00px;top:347.00px;font-size:8.2px;line-height:12px;transform:scaleX(0.9);transform-origin:0 0;">10.12.2014</div>
<div class="fld bl" style="left:736.00px;top:345.20px;width:49.00px;height:11.60px;"></div>
<div class="fld g" style="left:55.30px;top:358.50px;width:17.60px;height:11.60px;"></div>
<div class="fld p" style="left:74.10px;top:358.50px;width:95.90px;height:11.60px;"></div>
<div class="fld w" style="left:171.50px;top:358.50px;width:142.50px;height:11.60px;"></div>
<div class="fld p" style="left:316.50px;top:358.50px;width:11.50px;height:11.60px;"></div>
<div class="fld p" style="left:329.50px;top:358.50px;width:84.50px;height:11.60px;"></div>
<div class="fld p" style="left:416.00px;top:358.50px;width:17.00px;height:11.60px;"></div>
<div class="fld p" style="left:434.50px;top:358.50px;width:80.00px;height:11.60px;"></div>
<div class="fld p" style="left:516.00px;top:358.50px;width:80.00px;height:11.60px;"></div>
<div class="fld p" style="left:597.50px;top:358.50px;width:79.50px;height:11.60px;"></div>
<div class="fld w" style="left:678.50px;top:358.50px;width:56.00px;height:11.60px;"></div>
<div class="fld w" style="left:736.00px;top:358.50px;width:49.00px;height:11.60px;"></div>
<div class="fld g" style="left:55.30px;top:371.80px;width:17.60px;height:11.60px;"></div>
<div class="fld p" style="left:74.10px;top:371.80px;width:95.90px;height:11.60px;"></div>
<div class="fld w" style="left:171.50px;top:371.80px;width:142.50px;height:11.60px;"></div>
<div class="fld p" style="left:316.50px;top:371.80px;width:11.50px;height:11.60px;"></div>
<div class="fld p" style="left:329.50px;top:371.80px;width:84.50px;height:11.60px;"></div>
<div class="fld p" style="left:416.00px;top:371.80px;width:17.00px;height:11.60px;"></div>
<div class="fld p" style="left:434.50px;top:371.80px;width:80.00px;height:11.60px;"></div>
<div class="fld p" style="left:516.00px;top:371.80px;width:80.00px;height:11.60px;"></div>
<div class="fld p" style="left:597.50px;top:371.80px;width:79.50px;height:11.60px;"></div>
<div class="fld w" style="left:678.50px;top:371.80px;width:56.00px;height:11.60px;"></div>
<div class="fld w" style="left:736.00px;top:371.80px;width:49.00px;height:11.60px;"></div>
<div class="fld g" style="left:55.30px;top:385.10px;width:17.60px;height:11.60px;"></div>
<div class="fld p" style="left:74.10px;top:385.10px;width:95.90px;height:11.60px;"></div>
<div class="fld w" style="left:171.50px;top:385.10px;width:142.50px;height:11.60px;"></div>
<div class="fld p" style="left:316.50px;top:385.10px;width:11.50px;height:11.60px;"></div>
<div class="fld p" style="left:329.50px;top:385.10px;width:84.50px;height:11.60px;"></div>
<div class="fld p" style="left:416.00px;top:385.10px;width:17.00px;height:11.60px;"></div>
<div class="fld p" style="left:434.50px;top:385.10px;width:80.00px;height:11.60px;"></div>
<div class="fld p" style="left:516.00px;top:385.10px;width:80.00px;height:11.60px;"></div>
<div class="fld p" style="left:597.50px;top:385.10px;width:79.50px;height:11.60px;"></div>
<div class="fld w" style="left:678.50px;top:385.10px;width:56.00px;height:11.60px;"></div>
<div class="fld w" style="left:736.00px;top:385.10px;width:49.00px;height:11.60px;"></div>
<div class="fld g" style="left:55.30px;top:398.40px;width:17.60px;height:11.60px;"></div>
<div class="fld p" style="left:74.10px;top:398.40px;width:95.90px;height:11.60px;"></div>
<div class="fld w" style="left:171.50px;top:398.40px;width:142.50px;height:11.60px;"></div>
<div class="fld p" style="left:316.50px;top:398.40px;width:11.50px;height:11.60px;"></div>
<div class="fld p" style="left:329.50px;top:398.40px;width:84.50px;height:11.60px;"></div>
<div class="fld p" style="left:416.00px;top:398.40px;width:17.00px;height:11.60px;"></div>
<div class="fld p" style="left:434.50px;top:398.40px;width:80.00px;height:11.60px;"></div>
<div class="fld p" style="left:516.00px;top:398.40px;width:80.00px;height:11.60px;"></div>
<div class="fld p" style="left:597.50px;top:398.40px;width:79.50px;height:11.60px;"></div>
<div class="fld w" style="left:678.50px;top:398.40px;width:56.00px;height:11.60px;"></div>
<div class="fld w" style="left:736.00px;top:398.40px;width:49.00px;height:11.60px;"></div>
<div class="fld g" style="left:55.30px;top:411.70px;width:17.60px;height:11.60px;"></div>
<div class="fld p" style="left:74.10px;top:411.70px;width:95.90px;height:11.60px;"></div>
<div class="fld w" style="left:171.50px;top:411.70px;width:142.50px;height:11.60px;"></div>
<div class="fld p" style="left:316.50px;top:411.70px;width:11.50px;height:11.60px;"></div>
<div class="fld p" style="left:329.50px;top:411.70px;width:84.50px;height:11.60px;"></div>
<div class="fld p" style="left:416.00px;top:411.70px;width:17.00px;height:11.60px;"></div>
<div class="fld p" style="left:434.50px;top:411.70px;width:80.00px;height:11.60px;"></div>
<div class="fld p" style="left:516.00px;top:411.70px;width:80.00px;height:11.60px;"></div>
<div class="fld p" style="left:597.50px;top:411.70px;width:79.50px;height:11.60px;"></div>
<div class="fld w" style="left:678.50px;top:411.70px;width:56.00px;height:11.60px;"></div>
<div class="fld w" style="left:736.00px;top:411.70px;width:49.00px;height:11.60px;"></div>
<div class="fld g" style="left:55.30px;top:425.00px;width:17.60px;height:11.60px;"></div>
<div class="fld p" style="left:74.10px;top:425.00px;width:95.90px;height:11.60px;"></div>
<div class="fld w" style="left:171.50px;top:425.00px;width:142.50px;height:11.60px;"></div>
<div class="fld p" style="left:316.50px;top:425.00px;width:11.50px;height:11.60px;"></div>
<div class="fld p" style="left:329.50px;top:425.00px;width:84.50px;height:11.60px;"></div>
<div class="fld p" style="left:416.00px;top:425.00px;width:17.00px;height:11.60px;"></div>
<div class="fld p" style="left:434.50px;top:425.00px;width:80.00px;height:11.60px;"></div>
<div class="fld p" style="left:516.00px;top:425.00px;width:80.00px;height:11.60px;"></div>
<div class="fld p" style="left:597.50px;top:425.00px;width:79.50px;height:11.60px;"></div>
<div class="fld w" style="left:678.50px;top:425.00px;width:56.00px;height:11.60px;"></div>
<div class="fld w" style="left:736.00px;top:425.00px;width:49.00px;height:11.60px;"></div>
<div class="" style="left:41.00px;top:345.00px;width:11.00px;height:90.00px;background:#cacaca;border:1px solid #b8c0cc;border-radius:3px"></div>
<div class="" style="left:41.00px;top:345.00px;width:11.00px;height:12.00px;background:#dcdcdc;border:1px solid #98a4b6;border-radius:3px"></div>
<div class="" style="left:41.00px;top:423.00px;width:11.00px;height:12.00px;background:#dcdcdc;border:1px solid #98a4b6;border-radius:3px"></div>
<svg style="position:absolute;left:41px;top:345px" width="11" height="90"><polygon points="3,7.5 5.5,4.5 8,7.5" fill="#50607a"/><polygon points="3,82.5 5.5,85.5 8,82.5" fill="#50607a"/><g fill="#f4f4f4"><circle cx="3.5" cy="34" r="0.7"/><circle cx="6.5" cy="36" r="0.7"/><circle cx="3.5" cy="38" r="0.7"/><circle cx="6.5" cy="40" r="0.7"/><circle cx="3.5" cy="42" r="0.7"/><circle cx="6.5" cy="44" r="0.7"/></g></svg>
<div class="fld g" style="left:434.50px;top:441.20px;width:80.00px;height:12.60px;"></div>
<div class="t rg" style="right:288.00px;top:444.00px;font-size:8.2px;line-height:12px;transform:scaleX(0.9);transform-origin:100% 0;">1 206.50</div>
<div class="fld g" style="left:516.00px;top:441.20px;width:80.00px;height:12.60px;"></div>
<div class="t rg" style="right:206.50px;top:444.00px;font-size:8.2px;line-height:12px;transform:scaleX(0.9);transform-origin:100% 0;">253.50</div>
<div class="fld g" style="left:597.50px;top:441.20px;width:79.50px;height:12.60px;"></div>
<div class="t rg" style="right:125.50px;top:444.00px;font-size:8.2px;line-height:12px;transform:scaleX(0.9);transform-origin:100% 0;">1 460.00</div>
<div class="t" style="left:42.80px;top:442.00px;font-size:8.2px;line-height:12px;transform:scaleX(0.98);transform-origin:0 0;font-weight:bold;">Referent</div>
<div class="fld w" style="left:42.50px;top:454.00px;width:130.50px;height:12.00px;"></div>
<div class="t rg" style="left:45.00px;top:455.00px;font-size:8.2px;line-height:12px;transform:scaleX(0.9);transform-origin:0 0;">Adam Antonín 1</div>
<div class="btn dis" style="left:230.80px;top:441.50px;width:48.20px;height:12.50px;"></div>
<div class="t" style="left:230.80px;width:48.20px;text-align:center;top:443.00px;font-size:8.2px;line-height:12px;color:#8a9ab6;transform:scaleX(0.9);">Za<u>o</u>krouhlit</div>
<div class="btn" style="left:283.00px;top:441.50px;width:47.70px;height:12.50px;border-right-color:#5a6880;border-bottom-color:#5a6880"></div>
<div class="t" style="left:283.00px;width:47.70px;text-align:center;top:443.00px;font-size:8.2px;line-height:12px;color:#000;transform:scaleX(0.9);font-weight:bold;"><u>Z</u>áloha</div>
<div class="btn dis" style="left:334.00px;top:441.50px;width:48.60px;height:12.50px;"></div>
<div class="t" style="left:334.00px;width:48.60px;text-align:center;top:443.00px;font-size:8.2px;line-height:12px;color:#8a9ab6;transform:scaleX(0.9);"><u>U</u>DD zálohy</div>
<div class="btn" style="left:178.80px;top:458.20px;width:48.00px;height:12.60px;"></div>
<div class="t" style="left:178.80px;width:48.00px;text-align:center;top:460.00px;font-size:8.2px;line-height:12px;color:#000;transform:scaleX(0.9);font-weight:bold;">Uzavřít</div>
<div class="btn dis" style="left:230.80px;top:458.20px;width:48.20px;height:12.60px;"></div>
<div class="t" style="left:230.80px;width:48.20px;text-align:center;top:460.00px;font-size:8.2px;line-height:12px;color:#8a9ab6;transform:scaleX(0.9);">Kontovat</div>
<div class="btn" style="left:334.00px;top:458.20px;width:48.60px;height:12.60px;"></div>
<div class="t" style="left:334.00px;width:48.60px;text-align:center;top:460.00px;font-size:8.2px;line-height:12px;color:#000;transform:scaleX(0.9);font-weight:bold;">Nové UDD</div>
<div class="" style="left:434.00px;top:464.00px;width:352.00px;height:10.00px;background:#cacaca;border:1px solid #b8c0cc;border-radius:2px"></div>
<div class="" style="left:434.00px;top:464.00px;width:11.00px;height:10.00px;background:#dcdcdc;border:1px solid #98a4b6;border-radius:2px"></div>
<div class="" style="left:775.00px;top:464.00px;width:11.00px;height:10.00px;background:#dcdcdc;border:1px solid #98a4b6;border-radius:2px"></div>
<svg style="position:absolute;left:434px;top:464px" width="352" height="10"><polygon points="6.5,2.5 3.5,5 6.5,7.5" fill="#50607a"/><polygon points="344.5,2.5 347.5,5 344.5,7.5" fill="#50607a"/><g fill="#f4f4f4" transform="translate(122,0)"><circle cx="0" cy="3.5" r="0.6"/><circle cx="3" cy="6" r="0.6"/><circle cx="6" cy="3.5" r="0.6"/><circle cx="9" cy="6" r="0.6"/><circle cx="12" cy="3.5" r="0.6"/><circle cx="15" cy="6" r="0.6"/><circle cx="18" cy="3.5" r="0.6"/><circle cx="21" cy="6" r="0.6"/><circle cx="24" cy="3.5" r="0.6"/><circle cx="27" cy="6" r="0.6"/><circle cx="30" cy="3.5" r="0.6"/><circle cx="33" cy="6" r="0.6"/><circle cx="36" cy="3.5" r="0.6"/><circle cx="39" cy="6" r="0.6"/><circle cx="42" cy="3.5" r="0.6"/><circle cx="45" cy="6" r="0.6"/><circle cx="48" cy="3.5" r="0.6"/><circle cx="51" cy="6" r="0.6"/><circle cx="54" cy="3.5" r="0.6"/><circle cx="57" cy="6" r="0.6"/><circle cx="60" cy="3.5" r="0.6"/><circle cx="63" cy="6" r="0.6"/><circle cx="66" cy="3.5" r="0.6"/><circle cx="69" cy="6" r="0.6"/><circle cx="72" cy="3.5" r="0.6"/><circle cx="75" cy="6" r="0.6"/><circle cx="78" cy="3.5" r="0.6"/><circle cx="81" cy="6" r="0.6"/><circle cx="84" cy="3.5" r="0.6"/><circle cx="87" cy="6" r="0.6"/><circle cx="90" cy="3.5" r="0.6"/><circle cx="93" cy="6" r="0.6"/><circle cx="96" cy="3.5" r="0.6"/><circle cx="99" cy="6" r="0.6"/><circle cx="102" cy="3.5" r="0.6"/><circle cx="105" cy="6" r="0.6"/></g></svg>
<div class="" style="left:2.50px;top:478.50px;width:795.50px;height:27.50px;border:1px solid #8a96a8;border-top-color:#2a2c30;border-radius:7px"></div>
<div class="" style="left:6.00px;top:492.20px;width:787.00px;height:1.20px;background:#4a525e"></div>
<div class="t" style="left:7.00px;top:481.00px;font-size:8.4px;line-height:12px;color:#e6e6e6;">Číslo objednávky</div>
<div class="t" style="left:7.00px;top:493.00px;font-size:8.3px;line-height:12px;color:#e6e6e6;">Záznam: 1/1</div>
<div class="" style="left:97.50px;top:494.00px;width:2.00px;height:10.50px;border-left:1px solid #48505c;border-right:1px solid #8a96a8"></div>
<div class="" style="left:116.50px;top:494.00px;width:2.00px;height:10.50px;border-left:1px solid #48505c;border-right:1px solid #8a96a8"></div>
<div class="" style="left:171.50px;top:494.00px;width:2.00px;height:10.50px;border-left:1px solid #48505c;border-right:1px solid #8a96a8"></div>
<div class="" style="left:241.50px;top:494.00px;width:2.00px;height:10.50px;border-left:1px solid #48505c;border-right:1px solid #8a96a8"></div>
<div class="" style="left:281.00px;top:494.00px;width:2.00px;height:10.50px;border-left:1px solid #48505c;border-right:1px solid #8a96a8"></div>
<div class="" style="left:786.00px;top:480.00px;width:3.00px;height:12.50px;border-left:1px solid #8a96a8;border-right:1px solid #3a4250"></div>
<div class="t" style="left:160.00px;top:494.00px;font-size:8px;line-height:12px;color:#e6e6e6;">...</div>
<div class="t" style="left:176.00px;top:493.00px;font-size:8.3px;line-height:12px;color:#e6e6e6;">Seznam hodn...</div>
<div class="t" style="left:286.50px;top:493.00px;font-size:8.3px;line-height:12px;color:#e6e6e6;">&lt;OSC&gt;</div>
</body></html>
